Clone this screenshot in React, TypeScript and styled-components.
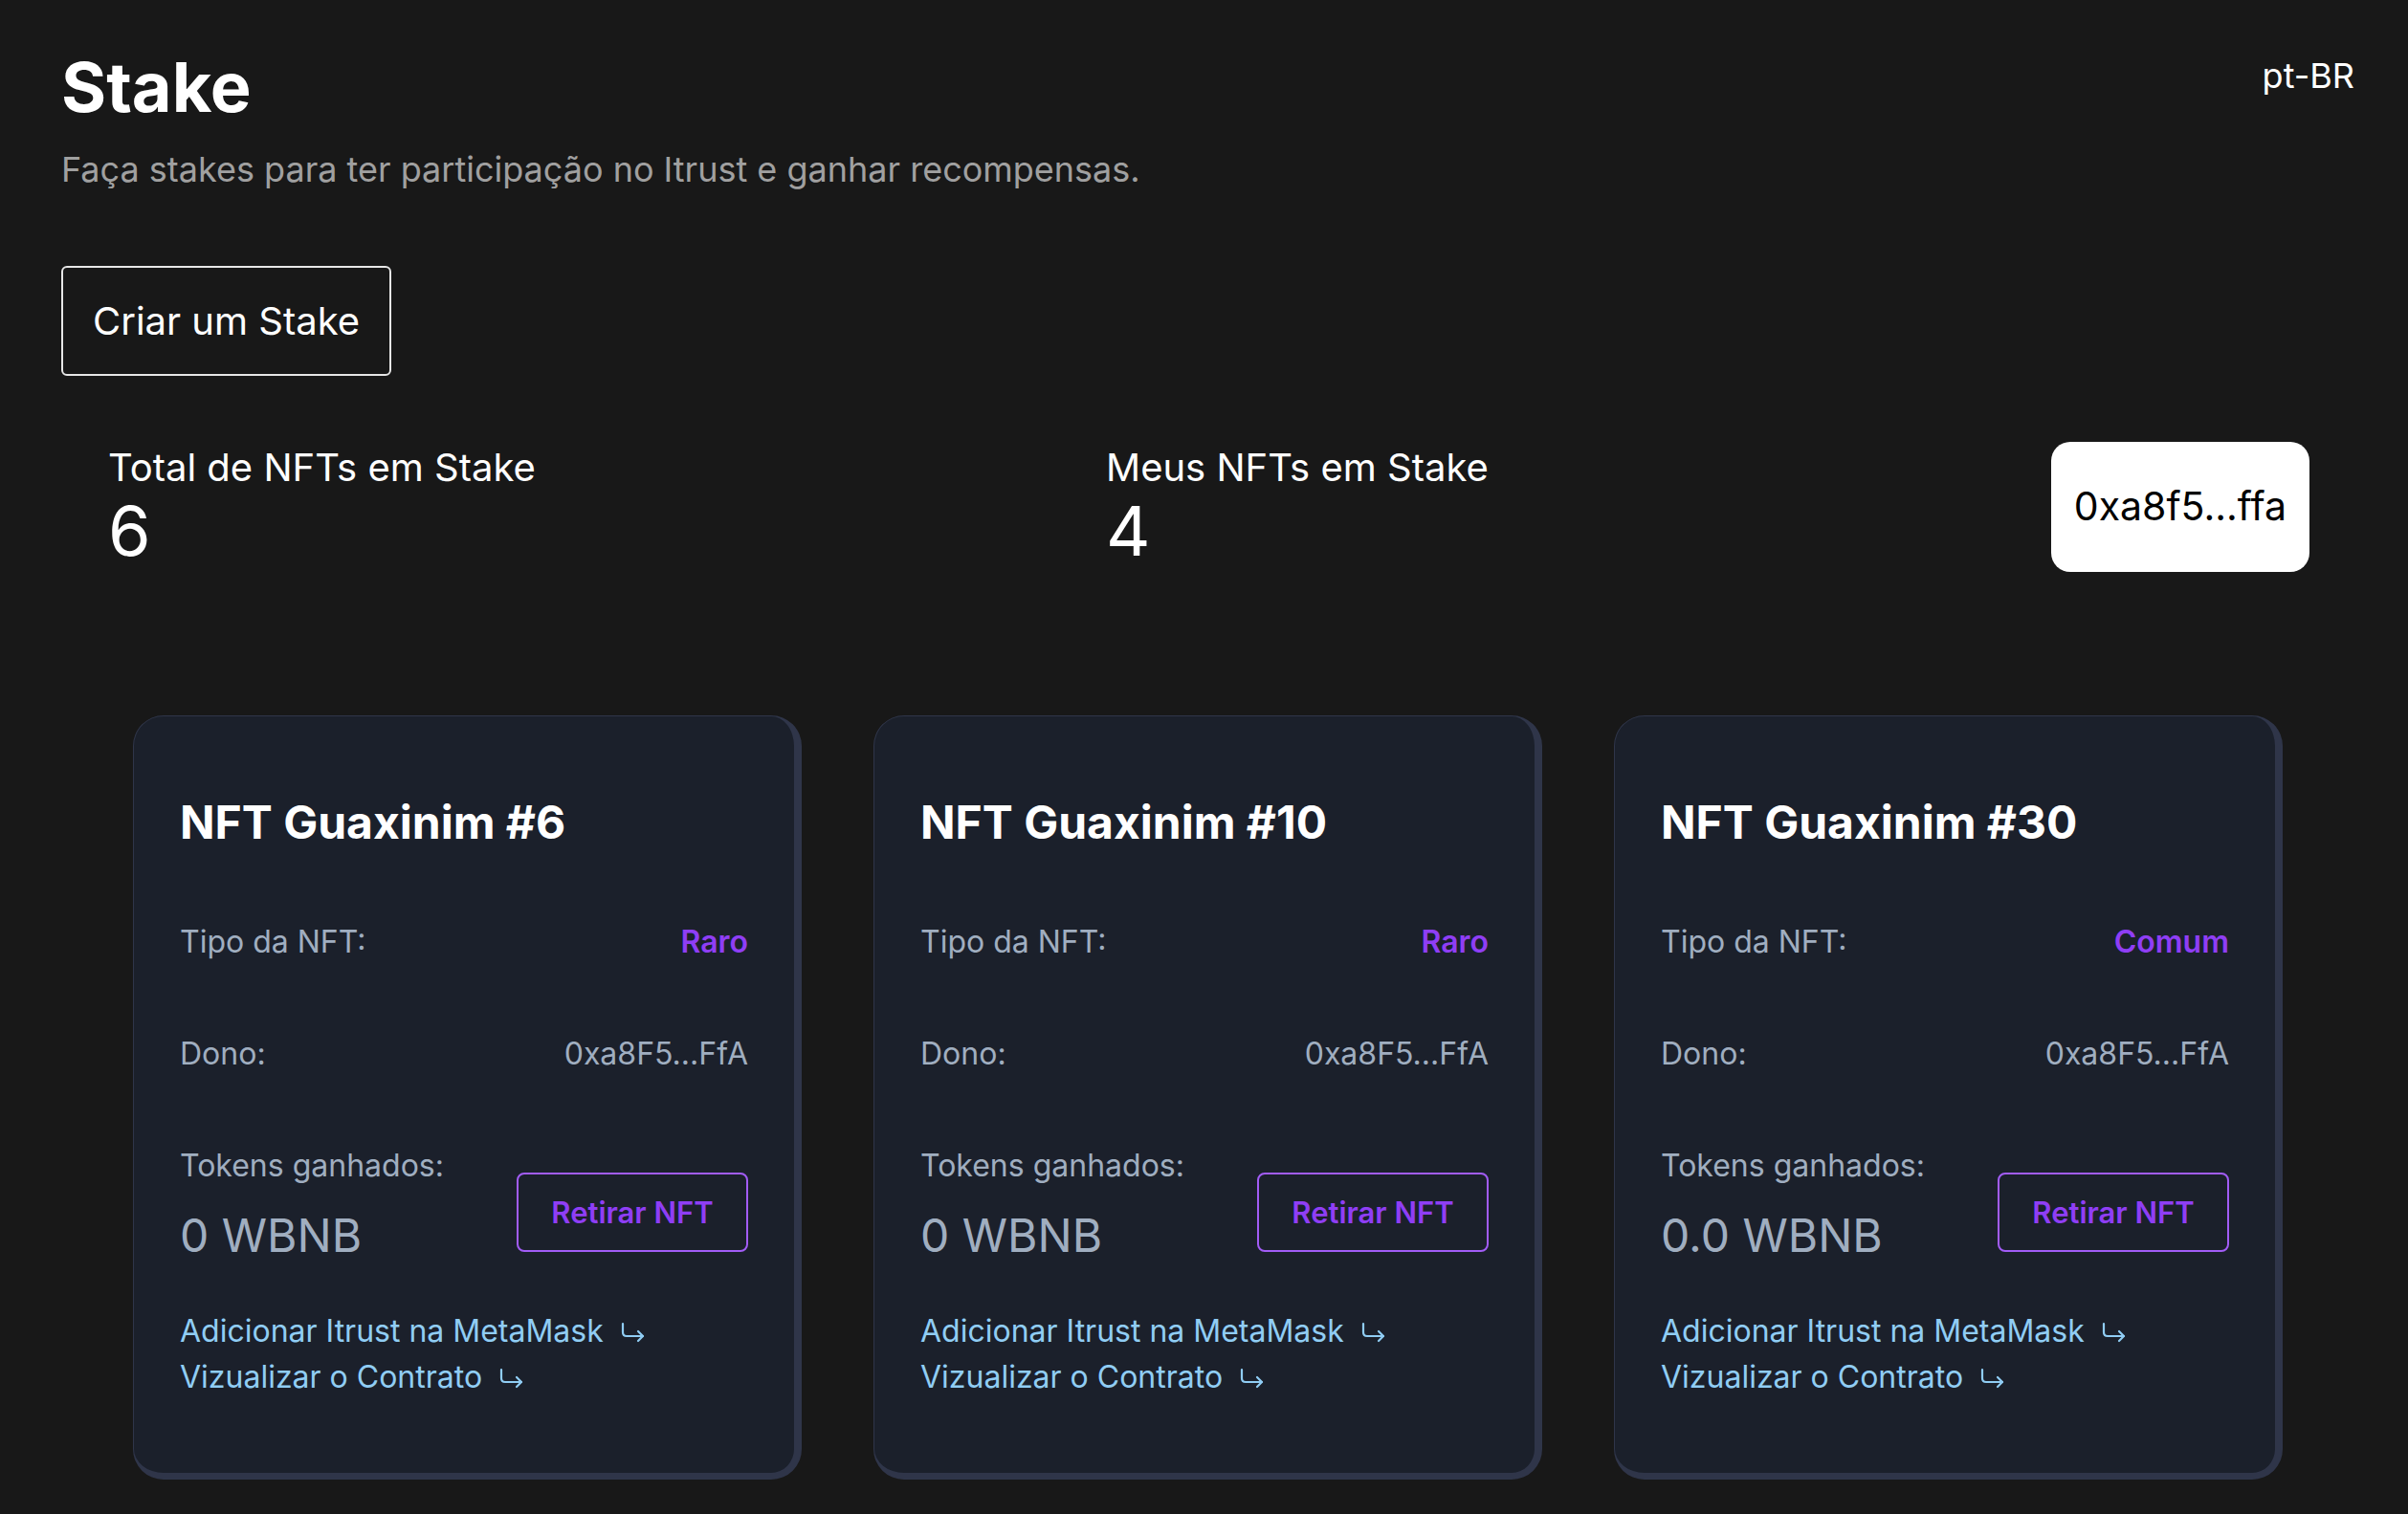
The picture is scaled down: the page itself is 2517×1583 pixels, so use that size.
import React from "react";
import styled, { createGlobalStyle } from "styled-components";

const GlobalStyle = createGlobalStyle`
  html, body {
    margin: 0;
    padding: 0;
    background: #181818;
  }
  body {
    font-family: Inter, "Noto Sans", "Liberation Sans", sans-serif;
    color: #ffffff;
  }
  * { box-sizing: border-box; }
`;

const Page = styled.main`
  min-height: 1583px;
  padding: 48px 56px 30px 64px;
  display: flex;
  flex-direction: column;
`;

const Header = styled.header`
  display: flex;
  justify-content: space-between;
  align-items: flex-start;
`;

const TitleBlock = styled.div`
  display: flex;
  flex-direction: column;
  gap: 16px;
`;

const Title = styled.h1`
  margin: 0;
  font-size: 72px;
  font-weight: 700;
  line-height: 1.2;
  color: #ffffff;
`;

const Subtitle = styled.p`
  margin: 0;
  font-size: 36px;
  line-height: 1.5;
  color: #a0a0a0;
`;

const Locale = styled.span`
  margin-top: 10px;
  font-size: 36px;
  line-height: 1.2;
  color: #ffffff;
`;

const CreateButton = styled.button`
  align-self: flex-start;
  margin-top: 74px;
  height: 115px;
  padding: 0 31px;
  border: 2px solid #e6e6e6;
  border-radius: 6px;
  background: transparent;
  color: #ffffff;
  font-family: inherit;
  font-size: 40px;
  line-height: 1;
  cursor: pointer;
`;

const StatsRow = styled.section`
  margin-top: 67px;
  padding: 0 47px 0 49px;
  display: grid;
  grid-template-columns: 1043px 1fr auto;
  align-items: center;
`;

const Stat = styled.div`
  display: flex;
  flex-direction: column;
  margin-top: 6px;
`;

const StatLabel = styled.span`
  font-size: 40px;
  line-height: 1.15;
  color: #ffffff;
`;

const StatNumber = styled.span`
  font-size: 72px;
  line-height: 1.2;
  font-weight: 400;
  color: #ffffff;
`;

const WalletButton = styled.button`
  grid-column: 3;
  height: 136px;
  padding: 0 24px;
  border: none;
  border-radius: 20px;
  background: #ffffff;
  color: #000000;
  font-family: inherit;
  font-size: 41px;
  line-height: 1;
  cursor: pointer;
`;

const CardGrid = styled.section`
  margin-top: 149px;
  padding: 0 75px;
  display: grid;
  grid-template-columns: repeat(3, 1fr);
  gap: 75px;
`;

const Card = styled.article`
  background: #1b202b;
  border-style: solid;
  border-color: #2f3549;
  border-width: 1px 8px 7px 1px;
  border-radius: 32px;
  padding: 82px 48px 76px;
  display: flex;
  flex-direction: column;
`;

const CardTitle = styled.h2`
  margin: 0;
  font-size: 48px;
  font-weight: 700;
  line-height: 1.2;
  color: #ffffff;
`;

const Details = styled.div`
  margin-top: 73px;
  display: flex;
  flex-direction: column;
  gap: 69px;
`;

const DetailRow = styled.div`
  display: flex;
  justify-content: space-between;
  align-items: baseline;
  font-size: 32px;
  line-height: 1.5;
`;

const Label = styled.span`
  color: #a0aec0;
`;

const Value = styled.span<{ $accent?: boolean }>`
  color: ${(p) => (p.$accent ? "#8f3ef5" : "#a0aec0")};
  font-weight: ${(p) => (p.$accent ? 600 : 400)};
`;

const TokensRow = styled.div`
  display: flex;
  justify-content: space-between;
  align-items: flex-start;
`;

const TokensBlock = styled.div`
  display: flex;
  flex-direction: column;
  gap: 20px;
`;

const TokensLabel = styled.span`
  font-size: 32px;
  line-height: 1.5;
  color: #a0aec0;
`;

const TokensAmount = styled.span`
  font-size: 48px;
  line-height: 1.2;
  color: #a0aec0;
`;

const WithdrawButton = styled.button`
  margin-top: 31px;
  width: 242px;
  height: 83px;
  border: 2px solid #a25cf6;
  border-radius: 8px;
  background: transparent;
  color: #8f3ef5;
  font-family: inherit;
  font-size: 31px;
  font-weight: 600;
  line-height: 1;
  cursor: pointer;
`;

const Links = styled.div`
  margin-top: 47px;
  display: flex;
  flex-direction: column;
`;

const LinkItem = styled.a`
  display: inline-flex;
  align-items: center;
  gap: 16px;
  font-size: 32px;
  line-height: 1.5;
  color: #90cdf4;
  text-decoration: none;
  cursor: pointer;
`;

const ArrowIcon = () => (
  <svg width="28" height="24" viewBox="0 0 28 24" fill="none" stroke="#90cdf4" strokeWidth="2.2" strokeLinecap="round" strokeLinejoin="round">
    <path d="M4 4 V13 Q4 17 8 17 H25" />
    <path d="M20 12 L25 17 L20 22" />
  </svg>
);

type Nft = { id: number; type: string; owner: string; tokens: string };

const nfts: Nft[] = [
  { id: 6, type: "Raro", owner: "0xa8F5...FfA", tokens: "0 WBNB" },
  { id: 10, type: "Raro", owner: "0xa8F5...FfA", tokens: "0 WBNB" },
  { id: 30, type: "Comum", owner: "0xa8F5...FfA", tokens: "0.0 WBNB" },
];

const NftCard = ({ nft }: { nft: Nft }) => (
  <Card>
    <CardTitle>NFT Guaxinim #{nft.id}</CardTitle>
    <Details>
      <DetailRow>
        <Label>Tipo da NFT:</Label>
        <Value $accent>{nft.type}</Value>
      </DetailRow>
      <DetailRow>
        <Label>Dono:</Label>
        <Value>{nft.owner}</Value>
      </DetailRow>
      <TokensRow>
        <TokensBlock>
          <TokensLabel>Tokens ganhados:</TokensLabel>
          <TokensAmount>{nft.tokens}</TokensAmount>
        </TokensBlock>
        <WithdrawButton>Retirar NFT</WithdrawButton>
      </TokensRow>
    </Details>
    <Links>
      <LinkItem>
        Adicionar Itrust na MetaMask <ArrowIcon />
      </LinkItem>
      <LinkItem>
        Vizualizar o Contrato <ArrowIcon />
      </LinkItem>
    </Links>
  </Card>
);

export default function App() {
  return (
    <>
      <GlobalStyle />
      <Page>
        <Header>
          <TitleBlock>
            <Title>Stake</Title>
            <Subtitle>Faça stakes para ter participação no Itrust e ganhar recompensas.</Subtitle>
          </TitleBlock>
          <Locale>pt-BR</Locale>
        </Header>
        <CreateButton>Criar um Stake</CreateButton>
        <StatsRow>
          <Stat>
            <StatLabel>Total de NFTs em Stake</StatLabel>
            <StatNumber>6</StatNumber>
          </Stat>
          <Stat>
            <StatLabel>Meus NFTs em Stake</StatLabel>
            <StatNumber>4</StatNumber>
          </Stat>
          <WalletButton>0xa8f5...ffa</WalletButton>
        </StatsRow>
        <CardGrid>
          {nfts.map((n) => (
            <NftCard key={n.id} nft={n} />
          ))}
        </CardGrid>
      </Page>
    </>
  );
}
